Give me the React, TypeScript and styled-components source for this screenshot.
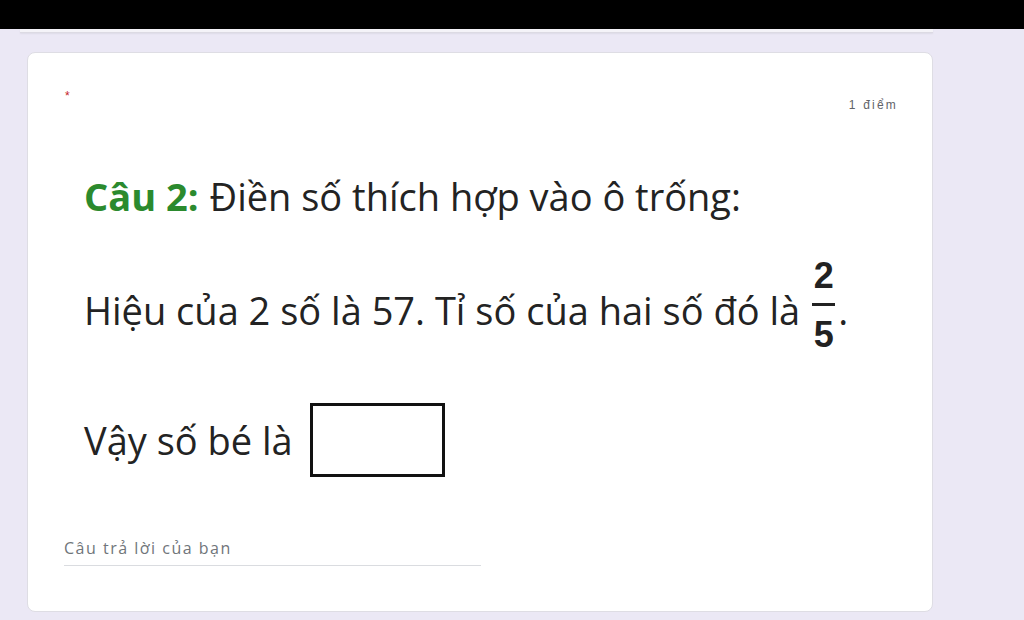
import styled, { createGlobalStyle } from "styled-components";

const GlobalStyle = createGlobalStyle`
  html, body {
    margin: 0;
    padding: 0;
    background: #ebe8f5;
  }
  body {
    font-family: "Open Sans", "Noto Sans", sans-serif;
    width: 1024px;
    height: 620px;
    overflow: hidden;
  }
`;

const TopBar = styled.div`
  height: 29px;
  background: #000;
`;

const PrevCardEdge = styled.div`
  margin-left: 20px;
  width: 913px;
  height: 3px;
  background: #f4f3f8;
  border-bottom: 1px solid #dcdae3;
  box-shadow: 0 1px 2px rgba(0, 0, 0, 0.06);
`;

const Card = styled.div`
  margin: 19px 0 0 27px;
  width: 906px;
  height: 560px;
  box-sizing: border-box;
  background: #fff;
  border: 1px solid #dedde4;
  border-radius: 8px;
  padding: 36px 34px 0 36px;
`;

const Header = styled.div`
  display: flex;
  justify-content: space-between;
  align-items: flex-start;
  height: 40px;
`;

const Required = styled.span`
  color: #c5221f;
  font-family: "Liberation Sans", Arial, sans-serif;
  font-size: 12px;
  line-height: 14px;
  margin-left: 1px;
`;

const Points = styled.span`
  color: #5f6368;
  font-family: "Liberation Sans", Arial, sans-serif;
  font-size: 12px;
  letter-spacing: 2.2px;
  line-height: 14px;
  margin-top: 9px;
`;

const QuestionImage = styled.div`
  padding-left: 20px;
  color: #232323;
  font-size: 38px;
`;

interface LineProps {
  $height: number;
}

const Line = styled.div<LineProps>`
  display: flex;
  align-items: center;
  height: ${(p) => p.$height}px;
  white-space: nowrap;
`;

const Label = styled.span`
  color: #2b8a2e;
  font-weight: 700;
  margin-right: 11px;
`;

const Fraction = styled.span`
  display: inline-flex;
  flex-direction: column;
  align-items: center;
  margin: 0 0 9px 12px;
  font-family: "Liberation Sans", Arial, sans-serif;
  font-weight: 700;
  font-size: 36px;
  line-height: 36px;
  color: #222;
`;

const FractionBar = styled.span`
  width: 23px;
  height: 3px;
  background: #222;
  margin: 9px 0 11px;
`;

const Dot = styled.span`
  margin-left: 3px;
`;

const BlankBox = styled.span`
  display: inline-block;
  width: 129px;
  height: 68px;
  border: 3px solid #111;
  margin-left: 17px;
`;

const Answer = styled.div`
  width: 417px;
  margin-top: 14px;
  padding-bottom: 6px;
  border-bottom: 1px solid #dadce0;
  color: #70757a;
  font-size: 16px;
  letter-spacing: 1.5px;
  line-height: 22px;
`;

export default function App() {
  return (
    <>
      <GlobalStyle />
      <TopBar />
      <PrevCardEdge />
      <Card>
        <Header>
          <Required>*</Required>
          <Points>1 điểm</Points>
        </Header>
        <QuestionImage>
          <Line $height={134}>
            <Label>Câu 2:</Label>
            Điền số thích hợp vào ô trống:
          </Line>
          <Line $height={94}>
            Hiệu của 2 số là 57. Tỉ số của hai số đó là
            <Fraction>
              <span>2</span>
              <FractionBar />
              <span>5</span>
            </Fraction>
            <Dot>.</Dot>
          </Line>
          <Line $height={166}>
            Vậy số bé là
            <BlankBox />
          </Line>
        </QuestionImage>
        <Answer>Câu trả lời của bạn</Answer>
      </Card>
    </>
  );
}
